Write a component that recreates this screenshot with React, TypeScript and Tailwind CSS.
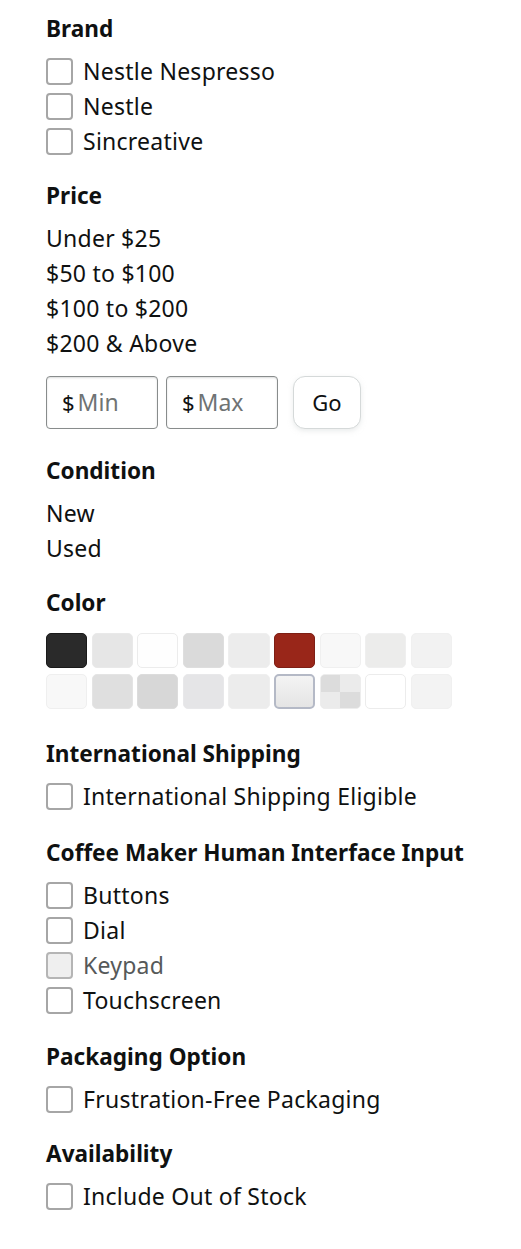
import type { ReactNode } from 'react'

const FONT = "font-['Noto_Sans',_'Liberation_Sans',_sans-serif]"

type Swatch = { bg: string; border: string; checker?: boolean }

const SWATCHES: Swatch[] = [
  { bg: 'bg-[#2a2a2a]', border: 'border-[#1a1a1a]' },
  { bg: 'bg-[#e6e6e6]', border: 'border-[#e9e9e9]' },
  { bg: 'bg-[#fefefe]', border: 'border-[#ececec]' },
  { bg: 'bg-[#dadada]', border: 'border-[#dedede]' },
  { bg: 'bg-[#ececec]', border: 'border-[#efefef]' },
  { bg: 'bg-[#992619]', border: 'border-[#7e1f15]' },
  { bg: 'bg-[#f8f8f8]', border: 'border-[#f0f0f0]' },
  { bg: 'bg-[#ececeb]', border: 'border-[#efefef]' },
  { bg: 'bg-[#f2f2f2]', border: 'border-[#f0f0f0]' },
  { bg: 'bg-[#f8f8f8]', border: 'border-[#efefef]' },
  { bg: 'bg-[#dfdfdf]', border: 'border-[#e4e4e4]' },
  { bg: 'bg-[#d7d7d7]', border: 'border-[#dcdcdc]' },
  { bg: 'bg-[#e5e5e7]', border: 'border-[#e8e8ea]' },
  { bg: 'bg-[#ececec]', border: 'border-[#efefef]' },
  { bg: 'bg-[#efefef]', border: 'border-[#b4b9c6]' },
  { bg: 'bg-[#e9e9e9]', border: 'border-[#ededed]', checker: true },
  { bg: 'bg-white', border: 'border-[#ececec]' },
  { bg: 'bg-[#f3f3f3]', border: 'border-[#f0f0f0]' },
]

function Heading({ children }: { children: ReactNode }) {
  return (
    <h3 className="h-[30px] leading-[30px] mb-[10px] text-[22.6px] font-bold text-[#0f1111]">{children}</h3>
  )
}

function CheckRow({ label, disabled }: { label: string; disabled?: boolean }) {
  return (
    <label className="flex items-center h-[35px] gap-[10px] cursor-pointer">
      <span
        className={`w-[27px] h-[27px] rounded-[4px] border-2 shrink-0 ${
          disabled ? 'border-[#b5b5b5] bg-[#efefef]' : 'border-[#a6a6a6] bg-white'
        }`}
      />
      <span
        className={`text-[23px] tracking-[0.25px] leading-[35px] ${
          disabled ? 'text-[#565959]' : 'text-[#0f1111]'
        }`}
      >
        {label}
      </span>
    </label>
  )
}

function TextRow({ label }: { label: string }) {
  return <div className="h-[35px] leading-[35px] text-[23px] tracking-[0.25px] text-[#0f1111]">{label}</div>
}

function PriceInput({ placeholder }: { placeholder: string }) {
  return (
    <div className="flex items-center w-[112px] h-[53px] px-[15px] rounded-[4px] border border-[#888c8c] bg-white shadow-[inset_0_1px_2px_rgba(15,17,17,0.15)]">
      <span className="text-[22px] text-[#0f1111] mr-[3px]">$</span>
      <span className="text-[23px] text-[#6f7373]">{placeholder}</span>
    </div>
  )
}

export default function App() {
  return (
    <div className={`${FONT} bg-white min-h-[1249px] px-[46px] pt-[14px] text-[#0f1111]`}>
      <section>
        <Heading>Brand</Heading>
        <CheckRow label="Nestle Nespresso" />
        <CheckRow label="Nestle" />
        <CheckRow label="Sincreative" />
      </section>

      <section className="mt-[22px]">
        <Heading>Price</Heading>
        <TextRow label="Under $25" />
        <TextRow label="$50 to $100" />
        <TextRow label="$100 to $200" />
        <TextRow label="$200 & Above" />
        <div className="flex items-center gap-[8px] mt-[15px]">
          <PriceInput placeholder="Min" />
          <PriceInput placeholder="Max" />
          <button className="ml-[7px] w-[68px] h-[53px] rounded-[12px] border border-[#d5d9d9] bg-white text-[22px] text-[#0f1111] shadow-[0_2px_5px_rgba(213,217,217,0.5)]">
            Go
          </button>
        </div>
      </section>

      <section className="mt-[27px]">
        <Heading>Condition</Heading>
        <TextRow label="New" />
        <TextRow label="Used" />
      </section>

      <section className="mt-[22px]">
        <h3 className="h-[30px] leading-[30px] mb-[15px] text-[22.6px] font-bold">Color</h3>
        <div className="grid grid-cols-9 w-[406px] gap-x-[4.5px] gap-y-[6px]">
          {SWATCHES.map((s, i) => (
            <div
              key={i}
              className={`h-[35px] rounded-[5px] border ${s.bg} ${s.border} overflow-hidden ${
                i === 14 ? 'border-2 bg-gradient-to-b from-[#f4f4f4] to-[#e4e4e4]' : ''
              }`}
            >
              {s.checker && (
                <div className="grid grid-cols-2 grid-rows-2 w-full h-full">
                  <div className="bg-[#dcdcdc]" />
                  <div className="bg-[#ebebeb]" />
                  <div className="bg-[#ebebeb]" />
                  <div className="bg-[#dcdcdc]" />
                </div>
              )}
            </div>
          ))}
        </div>
      </section>

      <section className="mt-[30px]">
        <Heading>International Shipping</Heading>
        <CheckRow label="International Shipping Eligible" />
      </section>

      <section className="mt-[24px]">
        <Heading>Coffee Maker Human Interface Input</Heading>
        <CheckRow label="Buttons" />
        <CheckRow label="Dial" />
        <CheckRow label="Keypad" disabled />
        <CheckRow label="Touchscreen" />
      </section>

      <section className="mt-[24px]">
        <Heading>Packaging Option</Heading>
        <CheckRow label="Frustration-Free Packaging" />
      </section>

      <section className="mt-[22px]">
        <Heading>Availability</Heading>
        <CheckRow label="Include Out of Stock" />
      </section>
    </div>
  )
}
